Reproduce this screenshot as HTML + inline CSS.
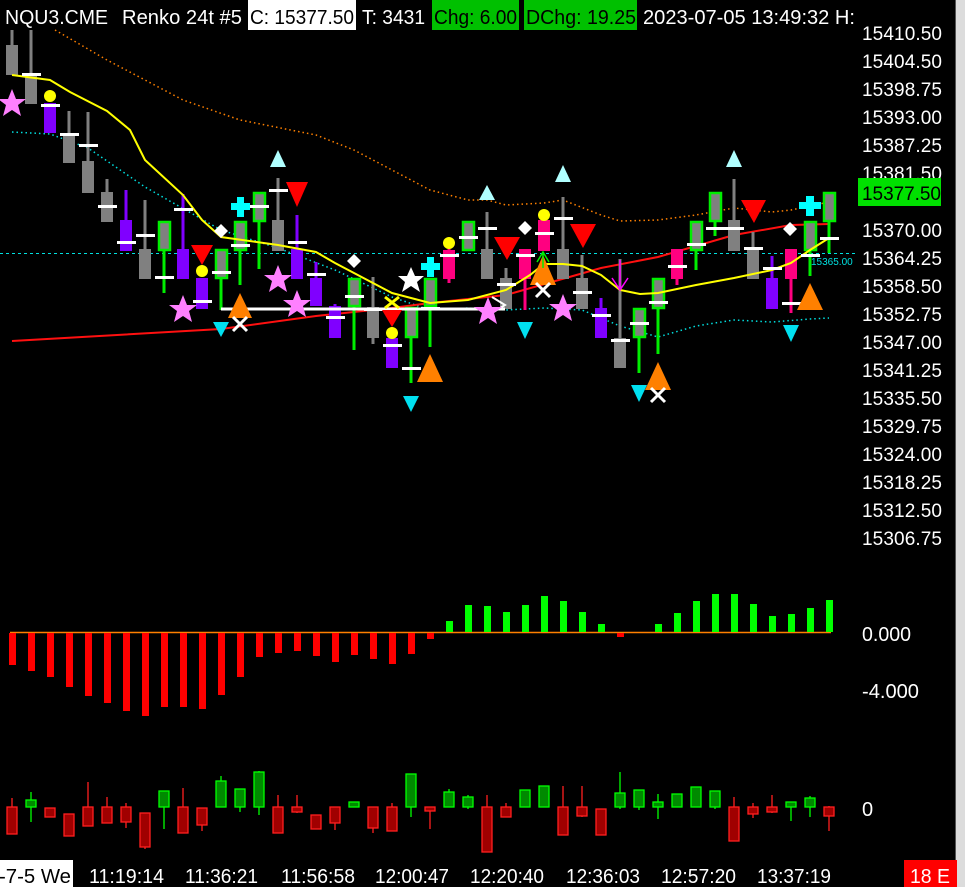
<!DOCTYPE html>
<html><head><meta charset="utf-8"><style>
html,body{margin:0;padding:0;background:#000;width:965px;height:887px;overflow:hidden}
svg{display:block}
text{font-family:"Liberation Sans",sans-serif}
</style></head><body>
<svg width="965" height="887" viewBox="0 0 965 887" xmlns="http://www.w3.org/2000/svg">
<rect width="965" height="887" fill="#000"/>
<rect x="956" y="0" width="9" height="887" fill="#dcdcdc"/>
<rect x="955" y="0" width="1" height="887" fill="#555"/>

<!-- header -->
<g font-size="20" fill="#fff">
<text x="5" y="24" textLength="103" lengthAdjust="spacingAndGlyphs">NQU3.CME</text>
<text x="122" y="24" textLength="120" lengthAdjust="spacingAndGlyphs">Renko 24t #5</text>
</g>
<rect x="248" y="0" width="108" height="30" fill="#fff"/>
<text x="250" y="24" font-size="20" fill="#000" textLength="104" lengthAdjust="spacingAndGlyphs">C: 15377.50</text>
<text x="362" y="24" font-size="20" fill="#fff" textLength="63" lengthAdjust="spacingAndGlyphs">T: 3431</text>
<rect x="432" y="0" width="87" height="30" fill="#00c000"/>
<text x="434" y="24" font-size="20" fill="#000" textLength="83" lengthAdjust="spacingAndGlyphs">Chg: 6.00</text>
<rect x="524" y="0" width="113" height="30" fill="#00c000"/>
<text x="526" y="24" font-size="20" fill="#000" textLength="110" lengthAdjust="spacingAndGlyphs">DChg: 19.25</text>
<text x="643" y="24" font-size="20" fill="#fff" textLength="212" lengthAdjust="spacingAndGlyphs">2023-07-05 13:49:32 H:</text>

<!-- price axis -->
<g font-size="19" fill="#fff">
<text x="862" y="40" textLength="80">15410.50</text><text x="862" y="68" textLength="80">15404.50</text><text x="862" y="96" textLength="80">15398.75</text>
<text x="862" y="124" textLength="80">15393.00</text><text x="862" y="152" textLength="80">15387.25</text><text x="862" y="180" textLength="80">15381.50</text>
<text x="862" y="237" textLength="80">15370.00</text><text x="862" y="265" textLength="80">15364.25</text><text x="862" y="293" textLength="80">15358.50</text>
<text x="862" y="321" textLength="80">15352.75</text><text x="862" y="349" textLength="80">15347.00</text><text x="862" y="377" textLength="80">15341.25</text>
<text x="862" y="405" textLength="80">15335.50</text><text x="862" y="433" textLength="80">15329.75</text><text x="862" y="461" textLength="80">15324.00</text>
<text x="862" y="489" textLength="80">15318.25</text><text x="862" y="517" textLength="80">15312.50</text><text x="862" y="545" textLength="80">15306.75</text>
</g>
<rect x="858" y="178" width="83" height="28" fill="#00e000"/>
<text x="862" y="200" font-size="19" fill="#000" textLength="79">15377.50</text>

<!-- horizontal dashed -->
<line x1="0" y1="253.5" x2="855" y2="253.5" stroke="#00e0e0" stroke-width="1" stroke-dasharray="3,3"/>
<text x="811" y="265" font-size="10" fill="#00e0e0">15365.00</text>

<!-- dotted lines -->
<polyline fill="none" stroke="#ff8000" stroke-width="1.5" stroke-dasharray="1.5,3" points="55,30 107,60 145,80 183,100 240,120 316,135 354,150 392,170 430,190 468,200 487,200 506,205 544,203 563,200 601,215 620,221 658,220 696,215 734,208 772,212 791,210 829,202"/>
<polyline fill="none" stroke="#00e0e0" stroke-width="1.5" stroke-dasharray="1.5,3" points="12,132 50,134 88,148 145,187 221,230 278,248 335,270 392,297 430,310 468,308 506,310 544,308 582,310 620,326 658,337 696,326 734,320 772,322 810,319 829,318"/>
<polyline fill="none" stroke="#ff1010" stroke-width="2" points="12,341 221,329 316,316 392,308 430,303 506,295 601,268 658,257 734,235 791,225 829,224"/>

<!-- candles -->
<g id="candles">
<g stroke-width="3">
<line x1="12" y1="30" x2="12" y2="75" stroke="#808080"/>
<line x1="31" y1="30" x2="31" y2="104" stroke="#808080"/>
<line x1="69" y1="111" x2="69" y2="163" stroke="#808080"/>
<line x1="88" y1="112" x2="88" y2="193" stroke="#808080"/>
<line x1="107" y1="179" x2="107" y2="222" stroke="#808080"/>
<line x1="126" y1="190" x2="126" y2="251" stroke="#8000ff"/>
<line x1="145" y1="200" x2="145" y2="279" stroke="#808080"/>
<line x1="164" y1="221" x2="164" y2="293" stroke="#00ee00"/>
<line x1="183" y1="194" x2="183" y2="279" stroke="#8000ff"/>
<line x1="221" y1="249" x2="221" y2="310" stroke="#00ee00"/>
<line x1="240" y1="221" x2="240" y2="285" stroke="#00ee00"/>
<line x1="259" y1="192" x2="259" y2="269" stroke="#00ee00"/>
<line x1="278" y1="178" x2="278" y2="251" stroke="#808080"/>
<line x1="297" y1="215" x2="297" y2="279" stroke="#8000ff"/>
<line x1="316" y1="262" x2="316" y2="306" stroke="#8000ff"/>
<line x1="335" y1="304" x2="335" y2="338" stroke="#8000ff"/>
<line x1="354" y1="278" x2="354" y2="350" stroke="#00ee00"/>
<line x1="373" y1="277" x2="373" y2="344" stroke="#808080"/>
<line x1="411" y1="307" x2="411" y2="383" stroke="#00ee00"/>
<line x1="430" y1="278" x2="430" y2="347" stroke="#00ee00"/>
<line x1="449" y1="238" x2="449" y2="283" stroke="#ff0080"/>
<line x1="487" y1="212" x2="487" y2="279" stroke="#808080"/>
<line x1="506" y1="268" x2="506" y2="309" stroke="#808080"/>
<line x1="525" y1="249" x2="525" y2="310" stroke="#ff0080"/>
<line x1="563" y1="197" x2="563" y2="279" stroke="#808080"/>
<line x1="582" y1="255" x2="582" y2="309" stroke="#808080"/>
<line x1="601" y1="298" x2="601" y2="338" stroke="#8000ff"/>
<line x1="620" y1="259" x2="620" y2="368" stroke="#808080"/>
<line x1="639" y1="308" x2="639" y2="373" stroke="#00ee00"/>
<line x1="658" y1="278" x2="658" y2="354" stroke="#00ee00"/>
<line x1="677" y1="249" x2="677" y2="285" stroke="#ff0080"/>
<line x1="696" y1="221" x2="696" y2="270" stroke="#00ee00"/>
<line x1="715" y1="192" x2="715" y2="236" stroke="#00ee00"/>
<line x1="734" y1="179" x2="734" y2="251" stroke="#808080"/>
<line x1="753" y1="232" x2="753" y2="279" stroke="#808080"/>
<line x1="772" y1="256" x2="772" y2="309" stroke="#8000ff"/>
<line x1="791" y1="249" x2="791" y2="313" stroke="#ff0080"/>
<line x1="810" y1="221" x2="810" y2="276" stroke="#00ee00"/>
<line x1="829" y1="192" x2="829" y2="253" stroke="#00ee00"/>
</g>
<g fill="#808080">
<rect x="6" y="45" width="12" height="30"/><rect x="25" y="75" width="12" height="29"/>
<rect x="63" y="134" width="12" height="29"/><rect x="82" y="161" width="12" height="32"/>
<rect x="101" y="192" width="12" height="30"/><rect x="139" y="249" width="12" height="30"/>
<rect x="272" y="220" width="12" height="31"/><rect x="367" y="307" width="12" height="31"/>
<rect x="481" y="249" width="12" height="30"/><rect x="500" y="278" width="12" height="31"/>
<rect x="557" y="249" width="12" height="30"/><rect x="576" y="278" width="12" height="31"/>
<rect x="614" y="338" width="12" height="30"/><rect x="728" y="220" width="12" height="31"/>
<rect x="747" y="249" width="12" height="30"/>
</g>
<g fill="#8000ff">
<rect x="44" y="103" width="12" height="30"/><rect x="120" y="220" width="12" height="31"/>
<rect x="177" y="249" width="12" height="30"/><rect x="196" y="278" width="12" height="31"/>
<rect x="291" y="249" width="12" height="30"/><rect x="310" y="278" width="12" height="28"/>
<rect x="329" y="306" width="12" height="32"/><rect x="386" y="338" width="12" height="30"/>
<rect x="595" y="308" width="12" height="30"/><rect x="766" y="278" width="12" height="31"/>
</g>
<g fill="#ff0080">
<rect x="443" y="250" width="12" height="29"/><rect x="519" y="249" width="12" height="30"/>
<rect x="538" y="220" width="12" height="31"/><rect x="671" y="249" width="12" height="30"/>
<rect x="785" y="249" width="12" height="30"/>
</g>
<g fill="#808080" stroke="#00ee00" stroke-width="2.5">
<rect x="159" y="222" width="11" height="28"/><rect x="216" y="250" width="11" height="28"/>
<rect x="235" y="222" width="11" height="28"/><rect x="254" y="193" width="11" height="28"/>
<rect x="349" y="279" width="11" height="27"/><rect x="406" y="308" width="11" height="29"/>
<rect x="425" y="279" width="11" height="27"/><rect x="463" y="222" width="11" height="28"/>
<rect x="634" y="309" width="11" height="28"/><rect x="653" y="279" width="11" height="29"/>
<rect x="691" y="222" width="11" height="28"/><rect x="710" y="193" width="11" height="28"/>
<rect x="805" y="222" width="11" height="28"/><rect x="824" y="193" width="11" height="28"/>
</g>
</g>

<polyline fill="none" stroke="#ffff00" stroke-width="2" points="12,75 50,80 70,92 107,111 130,130 145,160 183,195 202,220 221,237 278,245 316,252 335,263 392,293 430,303 468,300 506,290 530,275 544,264 563,264 582,266 601,275 620,290 640,294 658,293 696,285 734,278 772,270 791,263 810,250 829,238"/>

<line x1="221" y1="309" x2="505" y2="309" stroke="#fff" stroke-width="3"/>
<polyline points="492,297 505,305 492,313" fill="none" stroke="#fff" stroke-width="2"/>

<g fill="#fff">
<rect x="22" y="73" width="19" height="3"/><rect x="41" y="104" width="19" height="3"/>
<rect x="60" y="133" width="19" height="3"/><rect x="79" y="144" width="19" height="3"/>
<rect x="98" y="205" width="19" height="3"/><rect x="117" y="241" width="19" height="3"/>
<rect x="136" y="234" width="19" height="3"/><rect x="155" y="276" width="19" height="3"/>
<rect x="174" y="208" width="19" height="3"/><rect x="193" y="300" width="19" height="3"/>
<rect x="212" y="271" width="19" height="3"/><rect x="231" y="244" width="19" height="3"/>
<rect x="250" y="205" width="19" height="3"/><rect x="269" y="189" width="19" height="3"/>
<rect x="288" y="241" width="19" height="3"/><rect x="307" y="273" width="19" height="3"/>
<rect x="326" y="316" width="19" height="3"/><rect x="345" y="295" width="19" height="3"/>
<rect x="364" y="308" width="19" height="3"/><rect x="383" y="344" width="19" height="3"/>
<rect x="402" y="367" width="19" height="3"/><rect x="421" y="307" width="19" height="3"/>
<rect x="440" y="254" width="19" height="3"/><rect x="459" y="236" width="19" height="3"/>
<rect x="478" y="227" width="19" height="3"/><rect x="497" y="283" width="19" height="3"/>
<rect x="516" y="254" width="19" height="3"/><rect x="535" y="232" width="19" height="3"/>
<rect x="554" y="217" width="19" height="3"/><rect x="573" y="291" width="19" height="3"/>
<rect x="592" y="314" width="19" height="3"/><rect x="611" y="339" width="19" height="3"/>
<rect x="630" y="322" width="19" height="3"/><rect x="649" y="301" width="19" height="3"/>
<rect x="668" y="265" width="19" height="3"/><rect x="687" y="243" width="19" height="3"/>
<rect x="706" y="227" width="19" height="3"/><rect x="725" y="227" width="19" height="3"/>
<rect x="744" y="247" width="19" height="3"/><rect x="763" y="267" width="19" height="3"/>
<rect x="782" y="302" width="19" height="3"/><rect x="801" y="254" width="19" height="3"/>
<rect x="820" y="237" width="19" height="3"/>
</g>

<g fill="#ffff00">
<circle cx="50" cy="96" r="6"/><circle cx="202" cy="271" r="6"/><circle cx="392" cy="333" r="6"/>
<circle cx="449" cy="243" r="6"/><circle cx="544" cy="215" r="6"/>
</g>
<g fill="#ff0000">
<polygon points="191,245 213,245 202,265"/><polygon points="286,182 308,182 297,207"/>
<polygon points="382,310 402,310 392,327"/><polygon points="494,237 520,237 507,260"/>
<polygon points="570,224 596,224 583,248"/><polygon points="741,200 766,200 754,223"/>
</g>
<g fill="#b0ffff">
<polygon points="270,167 286,167 278,150"/><polygon points="479,200 495,200 487,185"/>
<polygon points="555,182 571,182 563,165"/><polygon points="726,167 742,167 734,150"/>
</g>
<g fill="#00e0f0">
<polygon points="213,322 229,322 221,337"/><polygon points="403,396 419,396 411,412"/>
<polygon points="517,322 533,322 525,339"/><polygon points="631,385 647,385 639,402"/>
<polygon points="783,325 799,325 791,342"/>
</g>
<g fill="#ff8000">
<polygon points="228,318 252,318 240,293"/><polygon points="417,382 443,382 430,354"/>
<polygon points="530,285 556,285 543,255"/><polygon points="645,390 671,390 658,362"/>
<polygon points="797,310 823,310 810,283"/>
</g>
<g stroke="#fff" stroke-width="3">
<path d="M233,317 L247,331 M247,317 L233,331"/><path d="M536,283 L550,297 M550,283 L536,297"/>
<path d="M651,388 L665,402 M665,388 L651,402"/>
</g>
<path d="M385,297 L399,308 M399,297 L385,308" stroke="#ffff00" stroke-width="3"/>
<g fill="#00ffff">
<path d="M237,197 h7 v6 h6 v7 h-6 v7 h-7 v-7 h-6 v-7 h6z"/>
<path d="M427,257 h7 v6 h6 v7 h-6 v7 h-7 v-7 h-6 v-7 h6z"/>
<path d="M806,196 h8 v6 h7 v7 h-7 v7 h-8 v-7 h-7 v-7 h7z"/>
</g>
<g fill="#fff">
<polygon points="221,224 228,231 221,238 214,231"/><polygon points="354,254 361,261 354,268 347,261"/>
<polygon points="525,221 532,228 525,235 518,228"/><polygon points="790,222 797,229 790,236 783,229"/>
<polygon points="411,267 415,276 424,276 417,282 420,292 411,286 402,292 405,282 398,276 407,276"/>
</g>
<g fill="#ff80ff">
<polygon points="12,89 16,99 26,99 18,105 21,116 12,110 3,116 6,105 -2,99 8,99"/>
<polygon points="183,295 187,305 197,305 189,311 192,322 183,316 174,322 177,311 169,305 179,305"/>
<polygon points="278,265 282,275 292,275 284,281 287,292 278,286 269,292 272,281 264,275 274,275"/>
<polygon points="297,290 301,300 311,300 303,306 306,317 297,311 288,317 291,306 283,300 293,300"/>
<polygon points="488,297 492,307 502,307 494,313 497,324 488,318 479,324 482,313 474,307 484,307"/>
<polygon points="563,294 567,304 577,304 569,310 572,321 563,315 554,321 557,310 549,304 559,304"/>
</g>
<path d="M620,260 V290 M612,278 L620,290 L628,278" stroke="#ff00ff" stroke-width="1.5" fill="none"/>
<path d="M537,262 L543,252 L549,262 M543,252 V268" stroke="#00ee00" stroke-width="1.5" fill="none"/>

<!-- histogram -->
<line x1="10" y1="632.5" x2="831" y2="632.5" stroke="#ff8000" stroke-width="1.5"/>
<g fill="#ff0000">
<rect x="9" y="633" width="7" height="32"/><rect x="28" y="633" width="7" height="38"/>
<rect x="47" y="633" width="7" height="44"/><rect x="66" y="633" width="7" height="54"/>
<rect x="85" y="633" width="7" height="63"/><rect x="104" y="633" width="7" height="70"/>
<rect x="123" y="633" width="7" height="78"/><rect x="142" y="633" width="7" height="83"/>
<rect x="161" y="633" width="7" height="74"/><rect x="180" y="633" width="7" height="74"/>
<rect x="199" y="633" width="7" height="76"/><rect x="218" y="633" width="7" height="62"/>
<rect x="237" y="633" width="7" height="44"/><rect x="256" y="633" width="7" height="24"/>
<rect x="275" y="633" width="7" height="20"/><rect x="294" y="633" width="7" height="18"/>
<rect x="313" y="633" width="7" height="23"/><rect x="332" y="633" width="7" height="29"/>
<rect x="351" y="633" width="7" height="22"/><rect x="370" y="633" width="7" height="26"/>
<rect x="389" y="633" width="7" height="31"/><rect x="408" y="633" width="7" height="21"/>
<rect x="427" y="633" width="7" height="6"/><rect x="617" y="633" width="7" height="4"/>
</g>
<g fill="#00ff00">
<rect x="446" y="621" width="7" height="11"/><rect x="465" y="605" width="7" height="27"/>
<rect x="484" y="606" width="7" height="26"/><rect x="503" y="612" width="7" height="20"/>
<rect x="522" y="605" width="7" height="27"/><rect x="541" y="596" width="7" height="36"/>
<rect x="560" y="601" width="7" height="31"/><rect x="579" y="612" width="7" height="20"/>
<rect x="598" y="624" width="7" height="8"/><rect x="655" y="624" width="7" height="8"/>
<rect x="674" y="613" width="7" height="19"/><rect x="693" y="601" width="7" height="31"/>
<rect x="712" y="594" width="7" height="38"/><rect x="731" y="594" width="7" height="38"/>
<rect x="750" y="604" width="7" height="28"/><rect x="769" y="616" width="7" height="16"/>
<rect x="788" y="614" width="7" height="18"/><rect x="807" y="608" width="7" height="24"/>
<rect x="826" y="600" width="7" height="32"/>
</g>
<text x="862" y="641" font-size="20" fill="#fff" textLength="49" lengthAdjust="spacingAndGlyphs">0.000</text>
<text x="862" y="698" font-size="20" fill="#fff" textLength="57" lengthAdjust="spacingAndGlyphs">-4.000</text>

<!-- lower oscillator candles -->
<g stroke-width="1.3">
<g stroke="#ff2020" fill="#a00000">
<line x1="12" y1="798" x2="12" y2="834"/><rect x="7" y="807" width="10" height="27"/>
<rect x="45" y="808" width="10" height="9"/>
<rect x="64" y="814" width="10" height="22"/>
<line x1="88" y1="782" x2="88" y2="826"/><rect x="83" y="807" width="10" height="19"/>
<line x1="107" y1="797" x2="107" y2="823"/><rect x="102" y="807" width="10" height="16"/>
<line x1="126" y1="803" x2="126" y2="828"/><rect x="121" y="807" width="10" height="15"/>
<line x1="145" y1="813" x2="145" y2="849"/><rect x="140" y="813" width="10" height="34"/>
<line x1="183" y1="788" x2="183" y2="833"/><rect x="178" y="807" width="10" height="26"/>
<line x1="202" y1="808" x2="202" y2="831"/><rect x="197" y="808" width="10" height="17"/>
<line x1="278" y1="795" x2="278" y2="813"/><rect x="273" y="807" width="10" height="26"/>
<line x1="297" y1="795" x2="297" y2="813"/><rect x="292" y="807" width="10" height="5"/>
<rect x="311" y="815" width="10" height="14"/>
<line x1="335" y1="807" x2="335" y2="830"/><rect x="330" y="807" width="10" height="16"/>
<line x1="373" y1="807" x2="373" y2="833"/><rect x="368" y="807" width="10" height="21"/>
<line x1="392" y1="803" x2="392" y2="807"/><rect x="387" y="807" width="10" height="24"/>
<line x1="430" y1="807" x2="430" y2="829"/><rect x="425" y="807" width="10" height="4"/>
<line x1="487" y1="795" x2="487" y2="851"/><rect x="482" y="807" width="10" height="45"/>
<line x1="506" y1="803" x2="506" y2="817"/><rect x="501" y="807" width="10" height="10"/>
<line x1="563" y1="786" x2="563" y2="835"/><rect x="558" y="807" width="10" height="28"/>
<line x1="582" y1="786" x2="582" y2="817"/><rect x="577" y="807" width="10" height="9"/>
<rect x="596" y="809" width="10" height="26"/>
<line x1="734" y1="797" x2="734" y2="841"/><rect x="729" y="807" width="10" height="34"/>
<line x1="753" y1="803" x2="753" y2="818"/><rect x="748" y="807" width="10" height="7"/>
<line x1="772" y1="795" x2="772" y2="813"/><rect x="767" y="807" width="10" height="5"/>
<line x1="829" y1="806" x2="829" y2="831"/><rect x="824" y="807" width="10" height="9"/>
</g>
<g stroke="#00ff00" fill="#008a00">
<line x1="31" y1="792" x2="31" y2="822"/><rect x="26" y="800" width="10" height="7"/>
<line x1="164" y1="791" x2="164" y2="829"/><rect x="159" y="791" width="10" height="16"/>
<line x1="221" y1="776" x2="221" y2="807"/><rect x="216" y="781" width="10" height="26"/>
<line x1="240" y1="789" x2="240" y2="812"/><rect x="235" y="789" width="10" height="18"/>
<line x1="259" y1="771" x2="259" y2="815"/><rect x="254" y="772" width="10" height="35"/>
<rect x="349" y="802" width="10" height="5"/>
<line x1="411" y1="774" x2="411" y2="817"/><rect x="406" y="774" width="10" height="33"/>
<line x1="449" y1="789" x2="449" y2="807"/><rect x="444" y="792" width="10" height="15"/>
<line x1="468" y1="795" x2="468" y2="809"/><rect x="463" y="797" width="10" height="10"/>
<rect x="520" y="790" width="10" height="17"/>
<rect x="539" y="786" width="10" height="21"/>
<line x1="620" y1="772" x2="620" y2="809"/><rect x="615" y="793" width="10" height="14"/>
<line x1="639" y1="790" x2="639" y2="810"/><rect x="634" y="790" width="10" height="17"/>
<line x1="658" y1="794" x2="658" y2="819"/><rect x="653" y="802" width="10" height="5"/>
<rect x="672" y="794" width="10" height="13"/>
<rect x="691" y="787" width="10" height="20"/>
<line x1="715" y1="791" x2="715" y2="809"/><rect x="710" y="791" width="10" height="16"/>
<line x1="791" y1="802" x2="791" y2="821"/><rect x="786" y="802" width="10" height="5"/>
<line x1="810" y1="796" x2="810" y2="817"/><rect x="805" y="798" width="10" height="9"/>
</g>
</g>
<text x="862" y="816" font-size="20" fill="#fff">0</text>

<!-- time axis -->
<rect x="0" y="860" width="73" height="27" fill="#fff"/>
<text x="-1" y="883" font-size="20" fill="#000" textLength="72" lengthAdjust="spacingAndGlyphs">-7-5 We</text>
<g font-size="20" fill="#fff">
<text x="89" y="883" textLength="75" lengthAdjust="spacingAndGlyphs">11:19:14</text>
<text x="185" y="883" textLength="73" lengthAdjust="spacingAndGlyphs">11:36:21</text>
<text x="281" y="883" textLength="74" lengthAdjust="spacingAndGlyphs">11:56:58</text>
<text x="375" y="883" textLength="74" lengthAdjust="spacingAndGlyphs">12:00:47</text>
<text x="470" y="883" textLength="74" lengthAdjust="spacingAndGlyphs">12:20:40</text>
<text x="566" y="883" textLength="74" lengthAdjust="spacingAndGlyphs">12:36:03</text>
<text x="661" y="883" textLength="75" lengthAdjust="spacingAndGlyphs">12:57:20</text>
<text x="757" y="883" textLength="74" lengthAdjust="spacingAndGlyphs">13:37:19</text>
</g>
<rect x="904" y="860" width="53" height="27" fill="#ff0000"/>
<text x="910" y="883" font-size="20" fill="#fff" textLength="40" lengthAdjust="spacingAndGlyphs">18 E</text>
</svg>
</body></html>
